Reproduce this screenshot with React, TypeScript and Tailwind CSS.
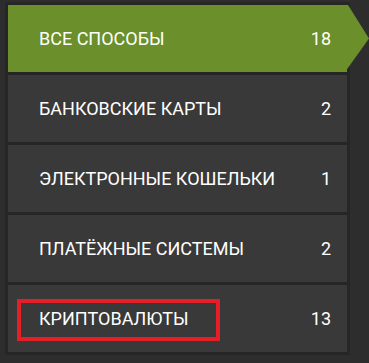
import React from "react";

const items = [
  { label: "ВСЕ СПОСОБЫ", count: 18, active: true },
  { label: "БАНКОВСКИЕ КАРТЫ", count: 2 },
  { label: "ЭЛЕКТРОННЫЕ КОШЕЛЬКИ", count: 1 },
  { label: "ПЛАТЁЖНЫЕ СИСТЕМЫ", count: 2 },
  { label: "КРИПТОВАЛЮТЫ", count: 13, marked: true },
];

export default function App() {
  return (
    <div
      className="w-[369px] h-[363px] bg-[#2d2d2d] pt-[2px] pl-[5px] overflow-hidden"
      style={{ fontFamily: "Roboto, 'Noto Sans', sans-serif" }}
    >
      <div className="w-[345px] bg-[#262626] p-[3px] flex flex-col gap-[3px]">
        {items.map((it) => (
          <div
            key={it.label}
            className={`relative h-[67px] flex items-center justify-between pl-[31px] pr-[16px] text-white text-[18px] ${
              it.active ? "bg-[#6b8f2b]" : "bg-[#393939]"
            }`}
          >
            <span>{it.label}</span>
            <span>{it.count}</span>
            {it.active && (
              <svg
                className="absolute left-full top-0"
                width="22"
                height="67"
                viewBox="0 0 22 67"
              >
                <polygon points="0,0 1,0 22,33.5 -2,67 0,67" fill="#6b8f2b" />
              </svg>
            )}
            {it.marked && (
              <div className="absolute left-[9px] top-[14px] w-[203px] h-[42px] border-[4px] border-[#e61e28]" />
            )}
          </div>
        ))}
      </div>
    </div>
  );
}
